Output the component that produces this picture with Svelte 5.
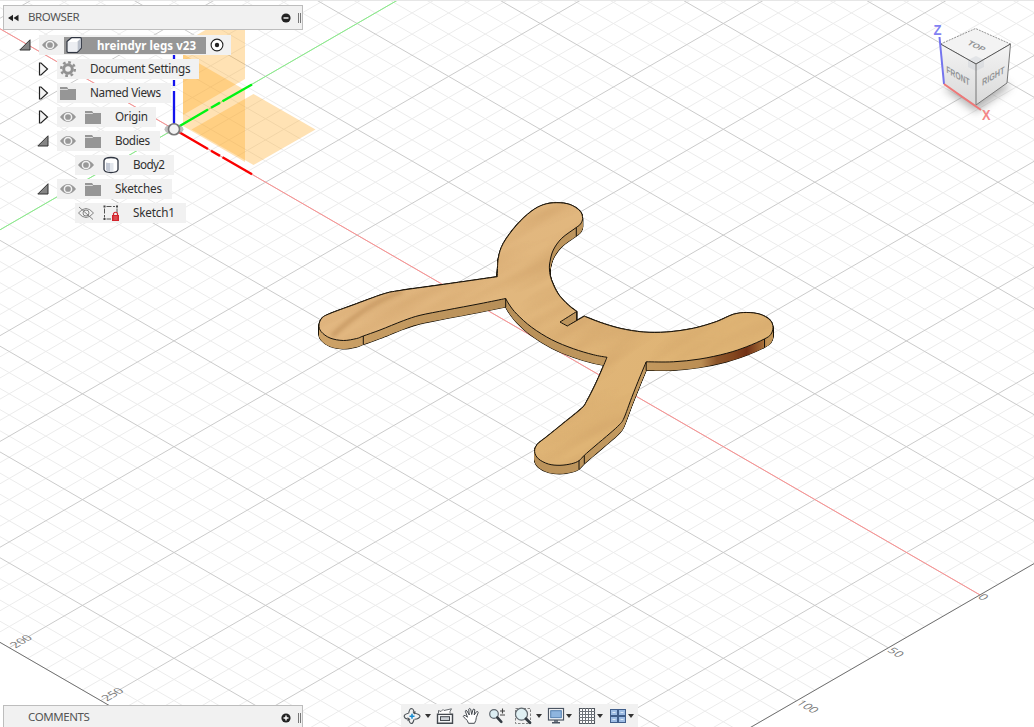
<script>
  // World origin and one major grid step, projected to the screen
  const ox = 174, oy = 129.3, sx = 91.55, sy = 52.9;
  const uMax = 8.8, vMax = 5.8;
  const project = (u, v) => [ox + (u - v) * sx, oy + (u + v) * sy];

  function gridLines(step, skip) {
    const out = [];
    for (let i = -40; i * step <= uMax + 0.001; i++) {
      if (skip && i % 5 === 0) continue;
      const u = i * step;
      out.push([...project(u, -12), ...project(u, vMax)]);
    }
    for (let i = -60; i * step <= vMax + 0.001; i++) {
      if (skip && i % 5 === 0) continue;
      const v = i * step;
      out.push([...project(-12, v), ...project(uMax, v)]);
    }
    return out.map((l) => `M${l[0]} ${l[1]}L${l[2]} ${l[3]}`).join('');
  }
  const minor = gridLines(0.2, true);
  const major = gridLines(1, false);

  // Contour of the part, split at its sharp corners
  const contour = [
    [[497.3,276.7],[498.3,258.3],[503.3,243.3],[516.7,225],[531,211.5],[543.3,204.7],[556.7,202.7],[570,204.5],[580,211],[582.6,218.3],[580.5,224],[576,227.7],[561.7,238.3],[553.3,250],[550,261.7],[549.5,270],[551.5,280],[558.3,294],[568.3,305],[576.7,311.5]],
    [[576.7,311.5],[560,322]],
    [[560,322],[567.3,326]],
    [[567.3,326],[584.3,316.2]],
    [[584.3,316.2],[600,322.3],[620,328.3],[643.3,332],[666.7,332],[693.3,328.3],[716.7,321.5],[733.3,314.3],[746.7,312.5],[760,314.2],[770,320],[773,327.3],[770.7,334.5],[764.3,339],[746.7,346.7],[726.7,353.3],[700,359],[673.3,361.8],[646.2,361.8]],
    [[646.2,361.8],[640,376.7],[631.7,397.5],[624,418],[619.3,424.8],[610,433.3],[595,446],[584.3,455.3],[579,460.7],[571.7,463.7],[560,465.3],[548.3,464],[538.3,458.7],[534.6,451.5],[537.3,444.3],[546.7,436.7],[563.3,423.3],[581.7,408.3],[586.7,401.2],[595,385],[601.7,370],[607,357.3]],
    [[607,357.3],[593.3,354.7],[573.3,348.7],[551.7,339.7],[531.7,327.3],[516.7,314],[509.5,305],[505.7,298.5]],
    [[505.7,298.5],[480,303.7],[446.7,310],[420,315.3],[403.3,320.7],[380,330],[363.3,336],[356.7,338.5],[343.3,340.5],[330,338],[321.2,331.7],[319,325],[322,318],[330,313.5],[353.3,304.9],[383.3,294],[400,290.5],[440,284.9],[497.3,276.7]]
  ];

  function smooth(segments) {
    let d = `M${segments[0][0]}`;
    for (const p of segments) {
      for (let i = 0; i < p.length - 1; i++) {
        const a = p[i - 1] ?? p[i], b = p[i], c = p[i + 1], e = p[i + 2] ?? c;
        d += `C${b[0] + (c[0] - a[0]) / 6} ${b[1] + (c[1] - a[1]) / 6} ${c[0] - (e[0] - b[0]) / 6} ${c[1] - (e[1] - b[1]) / 6} ${c[0]} ${c[1]}`;
      }
    }
    return d + 'Z';
  }
  const top = smooth(contour);
  const layers = Array.from({ length: 18 }, (_, i) => 8.5 - i * 0.5);
  const seams = [[363.3,336],[505.7,298.5],[576.3,227.7],[764.5,339],[646.2,362],[584.3,455.3],[579,460.7],[576.7,311.5]];

  const rows = [
    { label: 'hreindyr legs v23', level: 0, open: true, eye: 'on', icon: 'component', root: true, w: 192 },
    { label: 'Document Settings', level: 1, open: false, icon: 'gear', w: 142, tw: 100.5 },
    { label: 'Named Views', level: 1, open: false, icon: 'folder', w: 114, tw: 71 },
    { label: 'Origin', level: 1, open: false, eye: 'on', icon: 'folder', w: 99, tw: 33 },
    { label: 'Bodies', level: 1, open: true, eye: 'on', icon: 'folder', w: 103, tw: 35 },
    { label: 'Body2', level: 2, eye: 'on', icon: 'body', w: 99, tw: 32 },
    { label: 'Sketches', level: 1, open: true, eye: 'on', icon: 'folder', w: 115, tw: 47 },
    { label: 'Sketch1', level: 2, eye: 'off', icon: 'sketch', w: 111, tw: 42 }
  ];
  const tools = [
    { name: 'orbit', menu: true, gap: 3 },
    { name: 'look', gap: 6 },
    { name: 'hand', gap: 9 },
    { name: 'zoom', gap: 9 },
    { name: 'window', menu: true, gap: 9 },
    { name: 'display', menu: true, gap: 6 },
    { name: 'grid', menu: true, gap: 7 },
    { name: 'views', menu: true, gap: 6.5 }
  ];
</script>

{#snippet glyph(name)}
  <svg class="glyph" width="18" height="18" viewBox="0 0 18 18">
    {#if name === 'on'}
      <path d="M1 9Q9 -.8 17 9Q9 18.800 1 9Z" fill="#989898" />
      <circle cx="9" cy="9" r="3.600" fill="none" stroke="#f2f2f2" stroke-width="1.500" />
    {:else if name === 'off'}
      <path d="M1.500 9Q9 0 16.500 9Q9 18 1.500 9ZM2 3L16 15.500" fill="none" stroke="#777" stroke-width=".9" />
      <circle cx="9" cy="9" r="3" fill="none" stroke="#777" stroke-width=".9" />
    {:else if name === 'component'}
      <path d="M2 5.500L6.500 1.700H15.300Q16.300 1.700 16.300 2.700V12L12.300 16.300H3Q2 16.300 2 15.300Z" fill="#fff" stroke="#303642" stroke-width="1.200" stroke-linejoin="round" />
      <path d="M12.500 5.500L15.700 2.500V12L12.500 15.500Z" fill="#b9bfca" /><path d="M3 6H12V15.500H3Z" fill="#eceef2" />
    {:else if name === 'gear'}
      <circle cx="9" cy="9" r="4.300" fill="none" stroke="#929292" stroke-width="3" />
      <circle cx="9" cy="9" r="6.800" fill="none" stroke="#929292" stroke-width="2.500" stroke-dasharray="2.670 2.670" />
    {:else if name === 'folder'}
      <path d="M1 3H8L9.500 5H17V16H1Z" fill="#969696" /><path d="M1 5.500H8.500L10 4H17" stroke="#ededed" fill="none" stroke-width=".8" />
    {:else if name === 'body'}
      <path d="M2 4.500Q2.500 1.500 9 1.500T16 4.500V13.500Q15.500 16.500 9 16.500T2 13.500Z" fill="#fff" stroke="#303642" stroke-width="1.300" />
      <path d="M4 6.500Q6 7 8 7V15.500Q5 15.500 4 14Z" fill="#c4cad6" /><path d="M8 7H11.500V15.500H8Z" fill="#e3e7ed" />
    {:else if name === 'sketch'}
      <path d="M2.500 4.500V13.500M4.500 2.500H13M15 4.500V9M4.500 15H9" fill="none" stroke="#555" stroke-dasharray="5 1.500" />
      <path d="M1.500 1.500h2v2h-2zM14 1.500h2v2h-2zM1.500 14h2v2h-2z" fill="#444" />
      <path d="M11.500 11V9.500Q13.500 7 15.500 9.500V11" fill="none" stroke="#d3242d" stroke-width="1.200" /><rect x="10" y="11" width="7" height="6" fill="#d3242d" /><path d="M11.500 13H15.500M11.500 15H15.500" stroke="#ef8f90" stroke-width=".7" />
    {:else if name === 'orbit'}
      <path d="M5.700 6.200Q6.500 1.500 8.500 1.500Q10.800 1.700 11.200 6.200M11 12.500Q10 16.700 8.300 16.500Q6.300 16 5.700 12M10.500 6Q17 7 17 9.300Q16.500 11.500 11.500 12.300M5.500 6.200Q1 7.300 1.200 9.300Q1.500 11.300 4.500 12" fill="none" stroke="#4d5358" stroke-width="1.100" />
      <path d="M4.500 10.200V14.200L7.500 12.200ZM9.500 4.800L13 4.500L11.500 7.500Z" fill="#4d5358" /><path d="M9 6.700V11.700M6.500 9.200H11.500" stroke="#168ad0" stroke-width="1.500" />
    {:else if name === 'look'}
      <path d="M1.500 7.200H16.500V16.300H1.500Z" fill="#f6f7f8" stroke="#44494f" stroke-width="1.400" /><rect x="4.500" y="9.700" width="9" height="3.800" fill="#cbd0d5" stroke="#44494f" />
      <path d="M2.500 6.500V3.500L5 4.500L7 2.500L8 3.500L15.500 1.800L14 4.500V6.500" fill="#fff" stroke="#55595f" stroke-width=".9" />
    {:else if name === 'hand'}
      <path d="M6.500 16.300Q5.500 13 3.300 11.500L1.200 9.500Q1.500 7.800 3.500 8.700L5.500 10.200L3.300 4.200Q3.700 2.500 5 4L7.300 8L6.700 2.200Q7.800 .8 8.700 2.200L9.700 7.500L11 2.500Q12.200 1.400 12.800 2.800L12.200 8L14.500 4.700Q16 4 16.200 5.500L14.300 10.500Q14.200 13.500 12.500 16.300Z" fill="#fff" stroke="#454a50" stroke-linejoin="round" />
    {:else if name === 'zoom'}
      <circle cx="6" cy="7" r="4.300" fill="#dceef4" stroke="#5f676f" stroke-width="1.200" /><path d="M9.300 10.500L13.300 14.800" stroke="#343b42" stroke-width="2.600" stroke-linecap="round" />
      <path d="M12 4H17M14.500 1.500V6.500M12 8H17" stroke="#444" stroke-width="1.100" />
    {:else if name === 'window'}
      <path d="M1.500 1.500H16.500V16.500H1.500Z" fill="none" stroke="#777" stroke-width=".9" stroke-dasharray="2.500 1.500" /><circle cx="7.500" cy="7.200" r="6" fill="#e0f0f3" stroke="#626a70" stroke-width="1.200" /><path d="M12 11.700L16 15.700" stroke="#343b42" stroke-width="2.800" stroke-linecap="round" />
    {:else if name === 'display'}
      <rect x="1.500" y="1.500" width="15" height="11.500" fill="#fff" stroke="#4b5563" stroke-width="1.200" /><rect x="3.700" y="3.700" width="10.600" height="7" fill="#8eb5df" stroke="#527eaf" /><path d="M5 15.800H13M7 14H11" stroke="#4b5563" stroke-width="1.500" />
    {:else if name === 'grid'}
      <path d="M1.500 1.500H16.500V16.500H1.500Z" fill="#fff" stroke="#4f555d" stroke-width="1.100" /><path d="M4.500 1V17M7.500 1V17M10.500 1V17M13.500 1V17M1 4.500H17M1 7.500H17M1 10.500H17M1 13.500H17" stroke="#6f747a" />
    {:else if name === 'views'}
      <g fill="#9dbce4" stroke="#405e8b"><rect x="1.500" y="2.500" width="7" height="6" /><rect x="9.500" y="2.500" width="7" height="6" /><rect x="1.500" y="9.500" width="7" height="6" /><rect x="9.500" y="9.500" width="7" height="6" /></g><path d="M3.500 5.500h3m5 0h3m-11 7h3m5 0h3" stroke="#dbe9f8" stroke-width="1" />
    {/if}
  </svg>
{/snippet}

{#snippet panelBar(title, expanded)}
  <header class="panel">
    <span class="rewind">{#if expanded}<svg width="12" height="8" viewBox="0 0 12 8"><path d="M5 .8V7.200L0 4ZM10.500 .8V7.200L5.500 4Z" fill="#222" /></svg>{/if}</span>
    <span class="title">{title}</span>
    <svg width="10" height="10" viewBox="0 0 10 10"><circle cx="5" cy="5" r="4.600" fill="#222" /><path d={expanded ? 'M2.500 5H7.500' : 'M2.500 5H7.500M5 2.500V7.500'} stroke="#fff" stroke-width="1.400" /></svg>
    <i class="grip"></i>
  </header>
{/snippet}

<main>
  <svg class="scene" width="1034" height="727" viewBox="0 0 1034 727">
    <defs>
      <linearGradient id="side" gradientUnits="userSpaceOnUse" x1="318" y1="0" x2="774" y2="0">
        <stop offset="0" stop-color="#cda267" /><stop offset=".4" stop-color="#b78f58" /><stop offset=".7" stop-color="#c39a60" /><stop offset=".84" stop-color="#bb8e54" />
        <stop offset=".875" stop-color="#8b5429" /><stop offset=".91" stop-color="#84471f" /><stop offset=".94" stop-color="#713015" /><stop offset=".975" stop-color="#a36b36" /><stop offset=".985" stop-color="#c39658" />
      </linearGradient>
      <linearGradient id="wood" gradientUnits="userSpaceOnUse" x1="400" y1="240" x2="580" y2="440">
        <stop offset="0" stop-color="#e2b781" /><stop offset=".5" stop-color="#e1b77d" /><stop offset="1" stop-color="#dfb475" />
      </linearGradient>
      <clipPath id="face"><path d={top} /></clipPath>
      <filter id="grain" x="0" y="0" width="1" height="1">
        <feTurbulence type="fractalNoise" baseFrequency=".009 .06" numOctaves="2" seed="8" />
        <feColorMatrix values="0 0 0 0 .58  0 0 0 0 .32  0 0 0 0 .12  1.300 0 0 0 -.48" />
      </filter>
      <filter id="soft" x="-50%" y="-50%" width="200%" height="200%"><feGaussianBlur stdDeviation="4" /></filter>
      <filter id="blend" x="-50%" y="-50%" width="200%" height="200%"><feGaussianBlur stdDeviation="2" /></filter>
      <linearGradient id="cubeSide" x2="0" y2="1"><stop stop-color="#f4f4f4" /><stop offset="1" stop-color="#d9d9d9" /></linearGradient>
    </defs>

    <path d={minor} stroke="#ececec" />
    <path d={major} stroke="#cbcbcb" />
    <path d="M-42.500 4.200L980 594.900" stroke="#ff8f8f" />
    <path d="M0 229.800L397.800 0" stroke="#86f286" />
    <path d="M980 594.900L1071 542.200M980 594.900L705 753.700M-82.300 594.800L192.300 753.500" stroke="#707070" />
    <g class="ruler">
      <text transform="matrix(.866 -.5 .8 .5 15.500 648.500)">200</text>
      <text transform="matrix(.866 -.5 .8 .5 107 701.500)">250</text>
      <text transform="matrix(.866 .5 -.8 .5 977 597.500)">0</text>
      <text transform="matrix(.866 .5 -.8 .5 886.500 651)">50</text>
      <text transform="matrix(.866 .5 -.8 .5 795.500 703.500)">100</text>
    </g>

    <g fill="#ffaa23" fill-opacity=".34">
      <path d="M183 43L245 7V79L183 115Z" /><path d="M183 54L245 90V162L183 126Z" /><path d="M253.500 94L315.500 129.500L253.500 165L191.500 129.500Z" />
    </g>
    <path d="M174 129V91M174 86V80M174 76V40" stroke="#1414ee" stroke-width="2.300" />
    <path d="M178 127L208 109.500M211 107.800L220 102.600M222.500 101.200L252 84.500" stroke="#00f413" stroke-width="2.400" />
    <path d="M178 131.500L208 149M211 150.700L220 155.900M222.500 157.300L252 174.300" stroke="#fa0000" stroke-width="2.400" />
    <ellipse cx="174" cy="129.300" rx="9.500" ry="5.500" fill="#999" fill-opacity=".65" /><circle cx="174" cy="129.300" r="5.500" fill="#f2f2f2" stroke="#777" stroke-width="1.600" />

    <g>
      {#each layers as y}<path d={top} transform={`translate(0 ${y})`} fill="none" stroke="#1c1509" stroke-width="1.200" />{/each}
      {#each layers as y}<path d={top} transform={`translate(0 ${y})`} fill="url(#side)" />{/each}
      <path d={top} fill="url(#wood)" />
      <g clip-path="url(#face)">
        <rect x="200" y="200" width="700" height="500" transform="rotate(-29 546 340)" filter="url(#grain)" opacity=".6" />
        <path d="M332 336Q365 305 402 291" stroke="#9a6630" stroke-width="4" fill="none" opacity=".4" filter="url(#blend)" />
      </g>
      <path d={top} fill="none" stroke="#17120a" stroke-width="1" />
      {#each seams as s}<path d={`M${s[0]} ${s[1]}v8.500`} stroke="#17120a" />{/each}
    </g>

    <g>
      <path d="M943 88L976 112L1011 86L990 78Z" fill="#666" opacity=".5" filter="url(#soft)" />
      <path d="M940.500 44L975.500 28.500L1010.500 44L976 64Z" fill="#f3f3f3" stroke="#777" stroke-width=".8" stroke-dasharray="2 1" />
      <path d="M940.500 44L976 64V105L944 84Z" fill="url(#cubeSide)" />
      <path d="M1010.500 44L976 64V105L1007 83Z" fill="url(#cubeSide)" />
      <path d="M968 60L976 56L984 60V67L976 71L968 67Z" fill="#bcc4cc" opacity=".3" />
      <path d="M940.500 44L976 64L1010.500 44" fill="none" stroke="#555" />
      <path d="M976 64V105L1007 83L1010.500 44" fill="none" stroke="#777" />
      <path d="M939.500 37L944 84" stroke="#7474ee" stroke-width="2" /><path d="M944 84L981 110" stroke="#ef7777" stroke-width="2" />
      <g class="cube">
        <text textLength="19" lengthAdjust="spacingAndGlyphs" transform="matrix(.84 .42 -.65 .6 966.500 44)">TOP</text>
        <text textLength="27.500" lengthAdjust="spacingAndGlyphs" transform="matrix(.84 .49 .03 1.100 946.500 72.500)">FRONT</text>
        <text textLength="26.500" lengthAdjust="spacingAndGlyphs" transform="matrix(.84 -.49 -.03 1.100 982 86)">RIGHT</text>
      </g>
      <text class="axis" x="933.500" y="35" textLength="8" lengthAdjust="spacingAndGlyphs" fill="#8282f2">Z</text><text class="axis" x="982" y="120" textLength="8.500" lengthAdjust="spacingAndGlyphs" fill="#f48686">X</text>
    </g>
    <path d="M0 .5H1034" stroke="#e6e6e6" />
  </svg>

  <section class="browser">
    {@render panelBar('BROWSER', true)}
    <ul>
      {#each rows as row}
        <li class={`level${row.level}`}>
          <span class="toggle">
            {#if row.open === true}
              <svg width="12" height="12" viewBox="0 0 12 12"><path d="M11 .8V11H.8Z" fill="#858585" stroke="#333" /></svg>
            {:else if row.open === false}
              <svg width="12" height="14" viewBox="0 0 12 14"><path d="M2.500 1H4L10.500 7L4 13H2.500Z" fill="#f4f4f4" stroke="#222" stroke-width="1.200" /></svg>
            {/if}
          </span>
          <div class="node" style:width={`${row.w}px`}>
            {#if row.eye}{@render glyph(row.eye)}{/if}
            {#if row.root}
              <span class="selected">{@render glyph(row.icon)}<svg class="label" width="100" height="17"><text x="0" y="12.500" textLength="99">{row.label}</text></svg></span>
              <svg class="active" width="14" height="14" viewBox="0 0 14 14"><circle cx="7" cy="7" r="5.900" fill="#fff" stroke="#222" stroke-width="1.100" /><circle cx="7" cy="7" r="2.200" fill="#222" /></svg>
            {:else}
              <span class="icon" class:spaced={row.eye}>{@render glyph(row.icon)}</span>
              <svg class="label" width={row.tw + 1} height="20"><text x="0" y="14.200" textLength={row.tw}>{row.label}</text></svg>
            {/if}
          </div>
        </li>
      {/each}
    </ul>
  </section>

  <section class="comments">{@render panelBar('COMMENTS', false)}</section>

  <nav>
    {#each tools as tool}
      <span class="tool" style:margin-left={`${tool.gap - 1}px`}>
        {@render glyph(tool.name)}
        {#if tool.menu}<i class="caret" class:tight={tool.name !== 'orbit' && tool.name !== 'window'}></i>{/if}
      </span>
    {/each}
  </nav>
</main>

<style>
  :global(body) { margin: 0; background: #fff; }
  main { position: relative; width: 1034px; height: 727px; overflow: hidden; font-family: "Noto Sans", "Open Sans", sans-serif; color: #333; }
  svg { display: block; flex: none; }
  .ruler text { font: 12px "Open Sans", sans-serif; fill: #777; }
  .cube text { font: bold 9px "Liberation Sans", sans-serif; fill: #929496; }
  .axis { font: bold 14px "Liberation Sans", sans-serif; }
  .browser { position: absolute; left: 3px; top: 5px; width: 300px; }
  .comments { position: absolute; left: 3px; top: 705px; width: 300px; }
  .panel { box-sizing: border-box; height: 25px; border: 1px solid #bdbdbd; background: #f1f1f1; display: flex; align-items: center; padding-right: 1px; }
  .rewind { width: 20px; margin-left: 4px; }
  .title { flex: 1; font-size: 11.5px; color: #555; line-height: 18px; padding-bottom: 2px; letter-spacing: -.4px; }
  .grip { width: 1px; height: 10px; border: solid #777; border-width: 0 1px; margin-left: 7px; }
  ul { list-style: none; margin: 3px 0 0; padding: 0; }
  li { display: flex; align-items: center; height: 24px; }
  .level0 { padding-left: 16px; }
  .level1 { padding-left: 34px; }
  .level2 { padding-left: 52px; }
  .toggle { width: 20px; display: flex; justify-content: flex-start; flex: none; }
  .node { display: flex; align-items: center; height: 20px; background: #f1f1f1; box-sizing: border-box; padding-left: 2px; }
  .label { margin-left: 13px; overflow: visible; }
  .label text { font-size: 11.7px; fill: #303030; }
  .icon.spaced { margin-left: 7px; }
  .selected { display: flex; align-items: center; width: 142px; height: 17px; margin-left: 5px; padding-left: 2px; box-sizing: border-box; background: #969696; }
  .selected .glyph { margin-left: -1px; margin-right: 1px; }
  .selected .label text { font-size: 11.5px; font-weight: 700; fill: #fff; }
  .active { margin-left: 3.500px; }
  nav { position: absolute; left: 401px; top: 704px; width: 237px; height: 23px; background: #f1f1f1; display: flex; align-items: center; }
  .tool { display: flex; align-items: center; }
  .caret { border: 3px solid transparent; border-top: 4px solid #333; border-bottom: 0; margin-left: 4px; }
  .caret.tight { margin-left: 1px; }
</style>
